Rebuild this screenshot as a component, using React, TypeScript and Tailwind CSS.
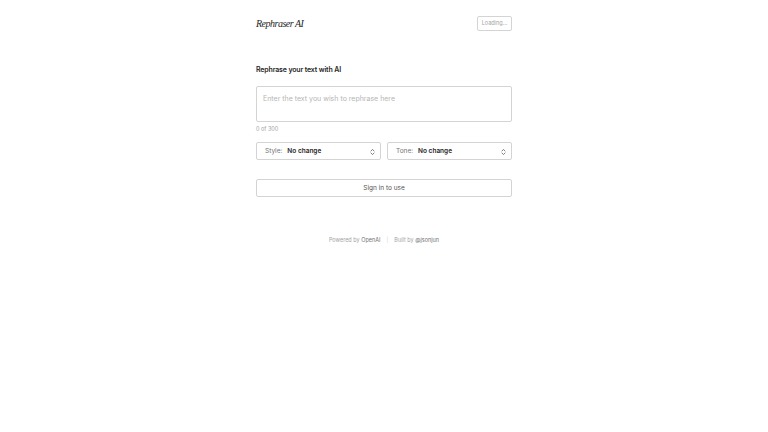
import React from "react";

function Chevrons() {
  return (
    <svg width="5" height="8" viewBox="0 0 5 8" fill="none" stroke="#737373" strokeWidth="0.9" strokeLinecap="round" strokeLinejoin="round">
      <path d="M1 3 L2.5 1.4 L4 3" />
      <path d="M1 5 L2.5 6.6 L4 5" />
    </svg>
  );
}

export default function App() {
  const sans = { fontFamily: "Inter, 'Noto Sans', sans-serif" };
  return (
    <div className="w-[768px] h-[432px] bg-white" style={sans}>
      <div className="w-[256px] mx-auto pt-[16px] flex flex-col">
        <div className="flex items-center justify-between h-[15px]">
          <span
            className="italic text-[10px] text-[#262626] tracking-[-0.5px]"
            style={{ fontFamily: "'Liberation Serif', 'DejaVu Serif', serif" }}
          >
            Rephraser AI
          </span>
          <div className="h-[15px] w-[35px] border border-[#d4d4d4] rounded-[2px] flex items-center justify-center text-[5.5px] text-[#a3a3a3]">
            Loading...
          </div>
        </div>
        <div className="mt-[34px] text-[7px] font-semibold text-[#262626] leading-[10px] tracking-[-0.15px]">
          Rephrase your text with AI
        </div>
        <div className="mt-[11px] h-[36px] border border-[#d4d4d4] rounded-[2px] px-[6px] pt-[7px] text-[7px] text-[#b5b5b5] leading-[10px]">
          Enter the text you wish to rephrase here
        </div>
        <div className="mt-[3px] text-[5.5px] text-[#a3a3a3] leading-[8px]">0 of 300</div>
        <div className="mt-[9px] flex gap-[6px]">
          {["Style:", "Tone:"].map((l) => (
            <div key={l} className="flex-1 h-[18px] border border-[#d4d4d4] rounded-[2px] flex items-center pl-[8px] pr-[5px] pt-[1px] text-[6.5px]">
              <span className="text-[#737373]">{l}</span>
              <span className="ml-[5px] font-semibold text-[#262626]">No change</span>
              <span className="ml-auto flex"><Chevrons /></span>
            </div>
          ))}
        </div>
        <div className="mt-[19px] h-[18px] border border-[#d4d4d4] rounded-[2px] flex items-center justify-center pt-[1px] text-[6.5px] text-[#525252]">
          Sign in to use
        </div>
        <div className="mt-[39px] flex items-center justify-center text-[5.5px] text-[#a3a3a3]">
          <span>Powered by <span className="text-[#737373]">OpenAI</span></span>
          <span className="mx-[6px] text-[#d4d4d4]">|</span>
          <span>Built by <span className="text-[#737373]">@jsonjun</span></span>
        </div>
      </div>
    </div>
  );
}
